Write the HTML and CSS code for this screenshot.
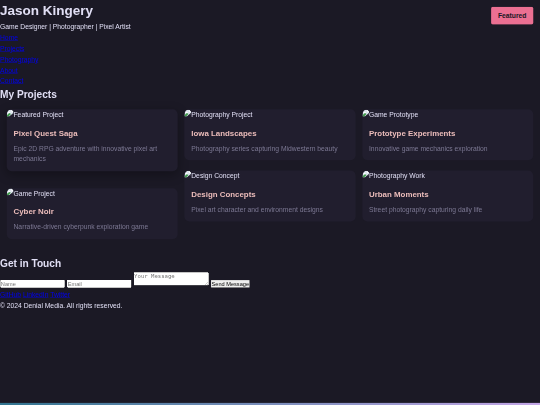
FILE: index.html
```html
<!DOCTYPE html>
<html lang="en">
  <head>
    <meta charset="UTF-8">
    <title>Jason Kingery</title>
    <link rel="stylesheet" href="styles.css">
  </head>
  <body>
    <svg width="0" height="0" class="sprite">
      <symbol id="picture" viewBox="0 0 16 16">
        <path d="M0 0h11l5 5v5L6 16H0z" fill="#dde5ee"/>
        <path d="M11 0v5h5z" fill="#fff"/>
        <path d="M3 7c0-2 3-3 4-1 2 0 2 2 1 2H3z" fill="#fff"/>
        <path d="M0 16V13l6-5 4 2-6 6z" fill="#3f9a4a"/>
        <path d="M6 16l10-9v3l-6 6z" fill="#211e2e"/>
      </symbol>
    </svg>

    <div class="page">
      <header>
        <h1>Jason Kingery</h1>
        <p>Game Designer | Photographer | Pixel Artist</p>
        <nav>
          <ul>
            <li><a href="#home">Home</a></li>
            <li><a href="#projects">Projects</a></li>
            <li><a href="#photography">Photography</a></li>
            <li><a href="#about">About</a></li>
            <li><a href="#contact">Contact</a></li>
          </ul>
        </nav>
      </header>
      <div class="badge">Featured</div>

      <section id="projects">
        <h2>My Projects</h2>
        <div class="grid">
          <div class="column">
            <article class="card featured">
              <div class="image"><svg><use href="#picture"/></svg><span>Featured Project</span></div>
              <div class="content">
                <h3>Pixel Quest Saga</h3>
                <p>Epic 2D RPG adventure with innovative pixel art mechanics</p>
              </div>
            </article>
            <article class="card">
              <div class="image"><svg><use href="#picture"/></svg><span>Game Project</span></div>
              <div class="content">
                <h3>Cyber Noir</h3>
                <p>Narrative-driven cyberpunk exploration game</p>
              </div>
            </article>
          </div>
          <div class="column">
            <article class="card">
              <div class="image"><svg><use href="#picture"/></svg><span>Photography Project</span></div>
              <div class="content">
                <h3>Iowa Landscapes</h3>
                <p>Photography series capturing Midwestern beauty</p>
              </div>
            </article>
            <article class="card">
              <div class="image"><svg><use href="#picture"/></svg><span>Design Concept</span></div>
              <div class="content">
                <h3>Design Concepts</h3>
                <p>Pixel art character and environment designs</p>
              </div>
            </article>
          </div>
          <div class="column">
            <article class="card">
              <div class="image"><svg><use href="#picture"/></svg><span>Game Prototype</span></div>
              <div class="content">
                <h3>Prototype Experiments</h3>
                <p>Innovative game mechanics exploration</p>
              </div>
            </article>
            <article class="card">
              <div class="image"><svg><use href="#picture"/></svg><span>Photography Work</span></div>
              <div class="content">
                <h3>Urban Moments</h3>
                <p>Street photography capturing daily life</p>
              </div>
            </article>
          </div>
        </div>
      </section>

      <section id="contact">
        <h2>Get in Touch</h2>
        <form>
          <input type="text" placeholder="Name">
          <input type="email" placeholder="Email">
          <textarea placeholder="Your Message"></textarea>
          <button type="submit">Send Message</button>
        </form>
      </section>

      <footer>
        <div class="social">
          <a href="#github">GitHub</a>
          <a href="#linkedin">LinkedIn</a>
          <a href="#twitter">Twitter</a>
        </div>
        <p>© 2024 Denial Media. All rights reserved.</p>
      </footer>
      <div class="bar"></div>
    </div>
  </body>
</html>
```
FILE: styles.css
```css
* {
  margin: 0;
  padding: 0;
  box-sizing: border-box;
}

html,
body {
  height: 100%;
  overflow: hidden;
  background: #1b1925;
}

/* desktop layout, shrunk to fit a small window */
.page {
  position: relative;
  width: 1280px;
  height: 960px;
  transform: scale(0.421875);
  transform-origin: 0 0;
  color: #e0def4;
  font-family: "Liberation Sans", Arial, sans-serif;
  line-height: 1.6;
}

.sprite {
  position: absolute;
}

h1 {
  font-size: 2rem;
}

h2 {
  font-size: 1.5rem;
}

ul {
  list-style: none;
}

a {
  color: #0000ee;
}

.badge {
  position: absolute;
  top: 1rem;
  right: 1rem;
  padding: 0.5rem 1rem;
  border-radius: 4px;
  background: #eb6f92;
  color: #191724;
  font-weight: bold;
}

.grid {
  display: flex;
  align-items: flex-start;
  gap: 1rem;
  padding: 1rem;
}

.column {
  flex: 1;
}

.card {
  margin-bottom: 1.5rem;
  border-radius: 12px;
  background: #211e2e;
  overflow: hidden;
}

.featured {
  margin-bottom: 2.5rem;
  box-shadow: 0 8px 24px rgba(0, 0, 0, 0.3);
}

.image {
  display: flex;
}

.image svg {
  width: 16px;
  height: 16px;
  margin-top: 1px;
}

.content {
  padding: 1rem;
}

h3 {
  margin-bottom: 0.5rem;
  color: #ebbcba;
  font-size: 1.17rem;
}

.content p {
  color: #7c7893;
}

input {
  width: 154px;
}

.bar {
  position: absolute;
  bottom: 0;
  left: 0;
  width: 100%;
  height: 5px;
  background: linear-gradient(90deg, #31748f, #c4a7e7);
}
```
